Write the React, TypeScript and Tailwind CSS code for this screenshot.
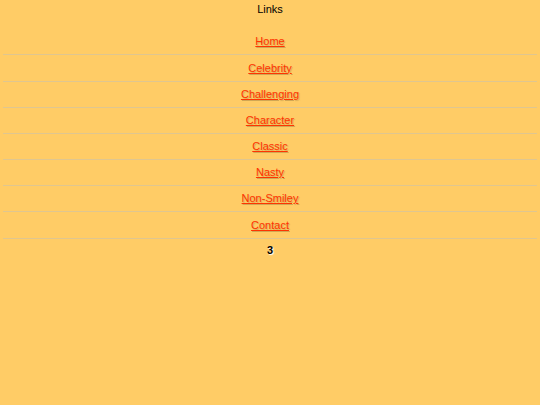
const links = [
  { label: "Home", row: "h-[25px]" },
  { label: "Celebrity", row: "h-[26px]" },
  { label: "Challenging", row: "h-[25px]" },
  { label: "Character", row: "h-[25px]" },
  { label: "Classic", row: "h-[25px]" },
  { label: "Nasty", row: "h-[25px]" },
  { label: "Non-Smiley", row: "h-[25px]" },
  { label: "Contact", row: "h-[26px]" },
];

export default function App() {
  return (
    <div className="min-h-[405px] w-full bg-[#ffcc66] px-[3px] font-['Liberation_Sans',Arial,sans-serif] text-[11px] leading-[13px] text-black">
      <div className="flex h-[29px] justify-center pt-[3px]">Links</div>
      <div className="flex flex-col">
        {links.map((link) => (
          <div key={link.label} className="flex flex-col">
            <div className={`flex items-center justify-center ${link.row}`}>
              <a
                href="#"
                className="text-[#ff3300] underline [text-shadow:1px_1px_1px_rgba(0,0,0,0.18)]"
              >
                {link.label}
              </a>
            </div>
            <div className="h-px bg-[#dfc690]" />
          </div>
        ))}
      </div>
      <div className="flex justify-center pt-[5px] font-bold [text-shadow:1px_1px_1px_#fff]">3</div>
    </div>
  );
}
